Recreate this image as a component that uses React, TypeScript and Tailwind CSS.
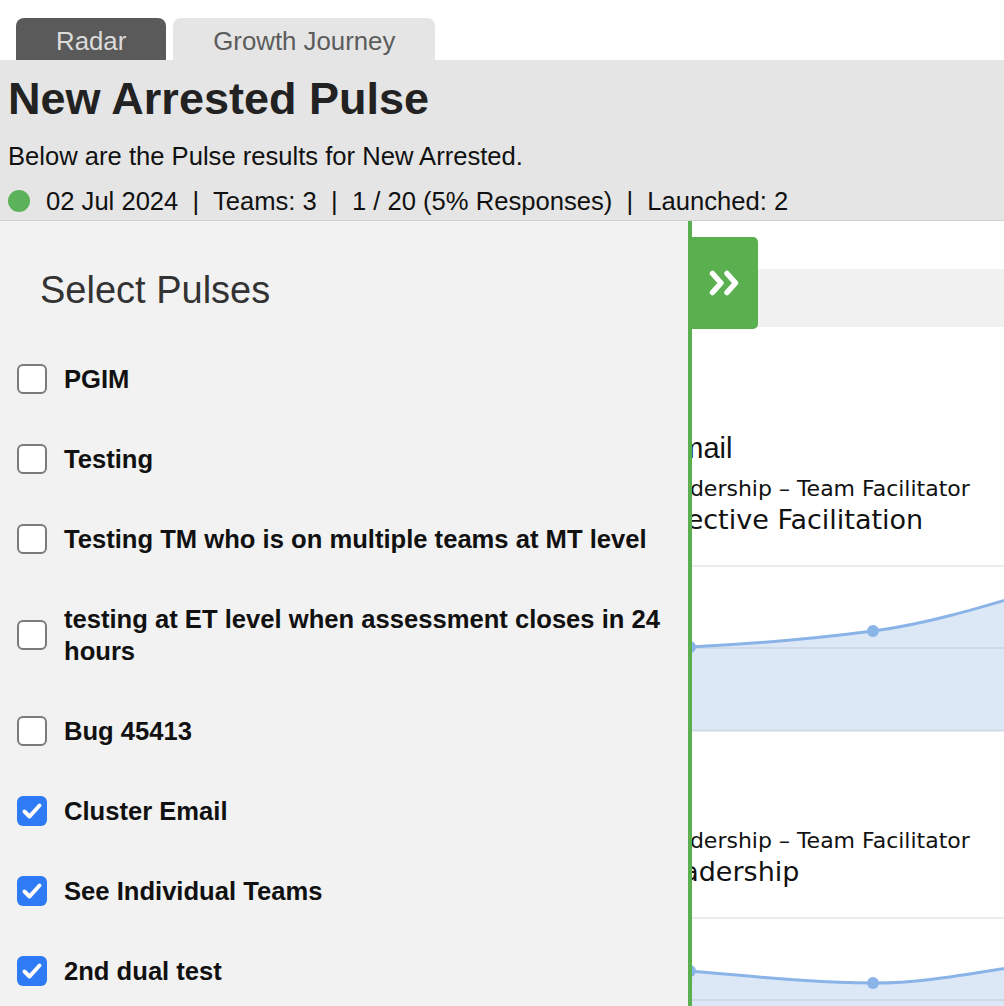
const pulses = [
  { name: "PGIM", checked: false },
  { name: "Testing", checked: false },
  { name: "Testing TM who is on multiple teams at MT level", checked: false },
  { name: "testing at ET level when assessment closes in 24 hours", checked: false },
  { name: "Bug 45413", checked: false },
  { name: "Cluster Email", checked: true },
  { name: "See Individual Teams", checked: true },
  { name: "2nd dual test", checked: true },
];

const charts = [
  {
    line: "M 507 88 C 568 85, 629 83, 690 80 C 751 77, 812 72, 873 64 C 934 56, 995 36, 1056 18",
    dots: [
      [690, 80],
      [873, 64],
    ],
  },
  {
    line: "M 507 38 C 568 43, 629 48, 690 52 C 751 57, 812 64, 873 64 C 934 64, 990 50, 1056 42",
    dots: [
      [690, 52],
      [873, 64],
    ],
  },
];

function Checkbox({ checked }: { checked: boolean }) {
  if (checked) {
    return (
      <span className="flex h-[30px] w-[30px] shrink-0 items-center justify-center rounded-[6px] bg-[#2f7bf5]">
        <svg width="30" height="30" viewBox="0 0 30 30">
          <polyline
            points="7.5,15.5 12.5,20.5 22.5,9.5"
            fill="none"
            stroke="white"
            strokeWidth="4"
            strokeLinecap="round"
            strokeLinejoin="round"
          />
        </svg>
      </span>
    );
  }
  return <span className="h-[30px] w-[30px] shrink-0 rounded-[6px] border-2 border-[#7b7b7b] bg-white" />;
}

function AreaChart({ line, dots }: { line: string; dots: number[][] }) {
  return (
    <div className="border-t-2 border-[#ececec]">
      <svg width="1056" height="165" viewBox="0 0 1056 165" className="block">
        <path d={`${line} L 1056 163 L 507 163 Z`} fill="#dde8f7" />
        <line x1="0" y1="81" x2="1056" y2="81" stroke="#cfd9e8" strokeWidth="2" />
        <line x1="0" y1="163.5" x2="1056" y2="163.5" stroke="#d3dbe8" strokeWidth="2" />
        <path d={line} fill="none" stroke="#8ab4e8" strokeWidth="3" />
        {dots.map(([x, y]) => (
          <circle key={x} cx={x} cy={y} r="6" fill="#8ab4e8" />
        ))}
      </svg>
    </div>
  );
}

export default function App() {
  return (
    <div className="flex h-[1006px] w-full flex-col overflow-hidden bg-white font-['Liberation_Sans',Arial,sans-serif]">
      {/* Tabs */}
      <div className="flex gap-[7px] pl-4 pt-[18px]">
        <div className="flex h-[42px] items-center rounded-t-[8px] bg-[#5a5a5a] px-10 pt-1 text-[25.8px] text-[#dcdcdc]">
          Radar
        </div>
        <div className="flex h-[42px] items-center rounded-t-[8px] bg-[#e5e5e5] px-10 pt-1 text-[25.8px] text-[#5c5c5c]">
          Growth Journey
        </div>
      </div>

      {/* Header */}
      <header className="border-b border-[#d0d0d0] bg-[#e5e5e5] px-2 pb-[3px] pt-[13px]">
        <h1 className="text-[45px] font-bold leading-[52px] text-[#222]">New Arrested Pulse</h1>
        <p className="mt-[15px] text-[25.6px] leading-8 text-[#111]">
          Below are the Pulse results for New Arrested.
        </p>
        <div className="mt-[13px] flex h-8 items-center gap-4 text-[25.6px] leading-8 text-[#111]">
          <span className="h-[22px] w-[22px] rounded-full bg-[#5cb25a]" />
          <span className="whitespace-pre">
            {"02 Jul 2024  |  Teams: 3  |  1 / 20 (5% Responses)  |  Launched: 2"}
          </span>
        </div>
      </header>

      {/* Body */}
      <div className="relative flex-1">
        {/* Results content, partly under the panel */}
        <div className="flex flex-col">
          <div className="mt-12 h-[58px] bg-[#f1f1f1]" />

          <h2 className="ml-[560px] mt-[105px] text-[29px] leading-8 text-[#111]">Cluster Email</h2>

          {[
            { sub: "Leadership – Team Facilitator", title: "Effective Facilitation", mt: "mt-3" },
            { sub: "Leadership – Team Facilitator", title: "Leadership", mt: "mt-[96px]" },
          ].map((b, i) => (
            <div key={i} className={b.mt}>
              <div className="ml-[651px] font-['DejaVu_Sans',sans-serif] text-[#111]">
                <div className="text-[22px] leading-[26px]">{b.sub}</div>
                <div className="mt-[2px] text-[27px] leading-8">{b.title}</div>
              </div>
              <div className="mt-[29px]">
                <AreaChart line={charts[i].line} dots={charts[i].dots} />
              </div>
            </div>
          ))}
        </div>

        {/* Select pulses panel */}
        <aside className="absolute inset-y-0 left-0 w-[692px] border-r-4 border-[#5aaf4f] bg-[#f2f2f2]">
          <button className="absolute left-full top-4 flex h-[92px] w-[70px] items-center justify-center rounded-r-[5px] bg-[#5aaf4f] pl-1">
            <svg width="32" height="26" viewBox="0 0 32 26">
              <g fill="none" stroke="white" strokeWidth="5.5" strokeLinecap="round" strokeLinejoin="round">
                <polyline points="3.5,3.5 12,13 3.5,22.5" />
                <polyline points="18,3.5 26.5,13 18,22.5" />
              </g>
            </svg>
          </button>

          <h3 className="pl-10 pt-[46px] text-[38px] leading-[46px] text-[#333]">Select Pulses</h3>

          <ul className="mt-[26px] pl-[17px] pr-6">
            {pulses.map((p) => (
              <li key={p.name} className="flex items-center gap-[17px] py-6">
                <Checkbox checked={p.checked} />
                <span className="text-[25.6px] font-bold leading-8 text-[#111]">{p.name}</span>
              </li>
            ))}
          </ul>
        </aside>
      </div>
    </div>
  );
}
